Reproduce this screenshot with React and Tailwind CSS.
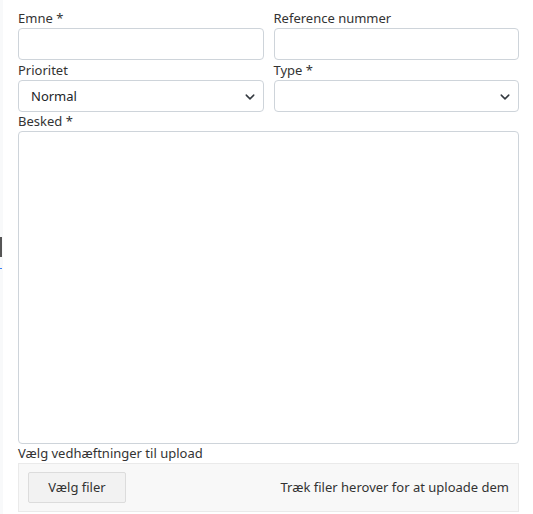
import React from 'react';

const chevron = (
  <svg viewBox="0 0 16 16" className="pointer-events-none absolute right-[9px] top-[12px] h-[10px] w-[10px]">
    <path d="M2 5l6 6 6-6" fill="none" stroke="#343a40" strokeWidth="2.4" strokeLinecap="round" strokeLinejoin="round" />
  </svg>
);

function Label({ children, h = 'h-[20px] leading-[20px]' }) {
  return <label className={`block text-[13px] text-[#333] ${h}`}>{children}</label>;
}

function Select({ value }) {
  return (
    <div className="relative">
      <div className="h-[32px] rounded-[4px] border border-[#ced4da] bg-white pl-[12px] text-[13px] leading-[30px] text-[#212529]">{value}</div>
      {chevron}
    </div>
  );
}

export default function App() {
  return (
    <div className="relative h-[514px] w-[533px] overflow-hidden bg-white font-['Segoe_UI','Noto_Sans',sans-serif]">
      <div className="absolute left-0 top-0 h-full w-[3px] bg-[#f8f9fa]" />
      <div className="absolute left-0 top-[237px] h-[20px] w-[2px] bg-[#555]" />
      <div className="absolute left-0 top-[268px] h-[1px] w-[2px] bg-[#3b82f6]" />
      <div className="pl-[18px] pr-[14px] pt-[8px]">
        <div className="grid grid-cols-2 gap-x-[10px]">
          <div>
            <Label>Emne *</Label>
            <div className="h-[32px] rounded-[4px] border border-[#ced4da] bg-white" />
          </div>
          <div>
            <Label>Reference nummer</Label>
            <div className="h-[32px] rounded-[4px] border border-[#ced4da] bg-white" />
          </div>
          <div>
            <Label>Prioritet</Label>
            <Select value="Normal" />
          </div>
          <div>
            <Label>Type *</Label>
            <Select value="" />
          </div>
        </div>
        <Label h="h-[19px] leading-[19px]">Besked *</Label>
        <div className="h-[313px] rounded-[4px] border border-[#ced4da] bg-white" />
        <Label h="h-[19px] leading-[19px]">Vælg vedhæftninger til upload</Label>
        <div className="flex h-[49px] items-center justify-between border border-[#eaeaea] bg-[#f8f8f8] pl-[9px] pr-[9px]">
          <button className="h-[31px] w-[98px] rounded-[2px] border border-[#dcdcdc] bg-[#f2f2f2] text-[13px] text-[#333]">Vælg filer</button>
          <span className="text-[13px] text-[#333]">Træk filer herover for at uploade dem</span>
        </div>
      </div>
    </div>
  );
}
